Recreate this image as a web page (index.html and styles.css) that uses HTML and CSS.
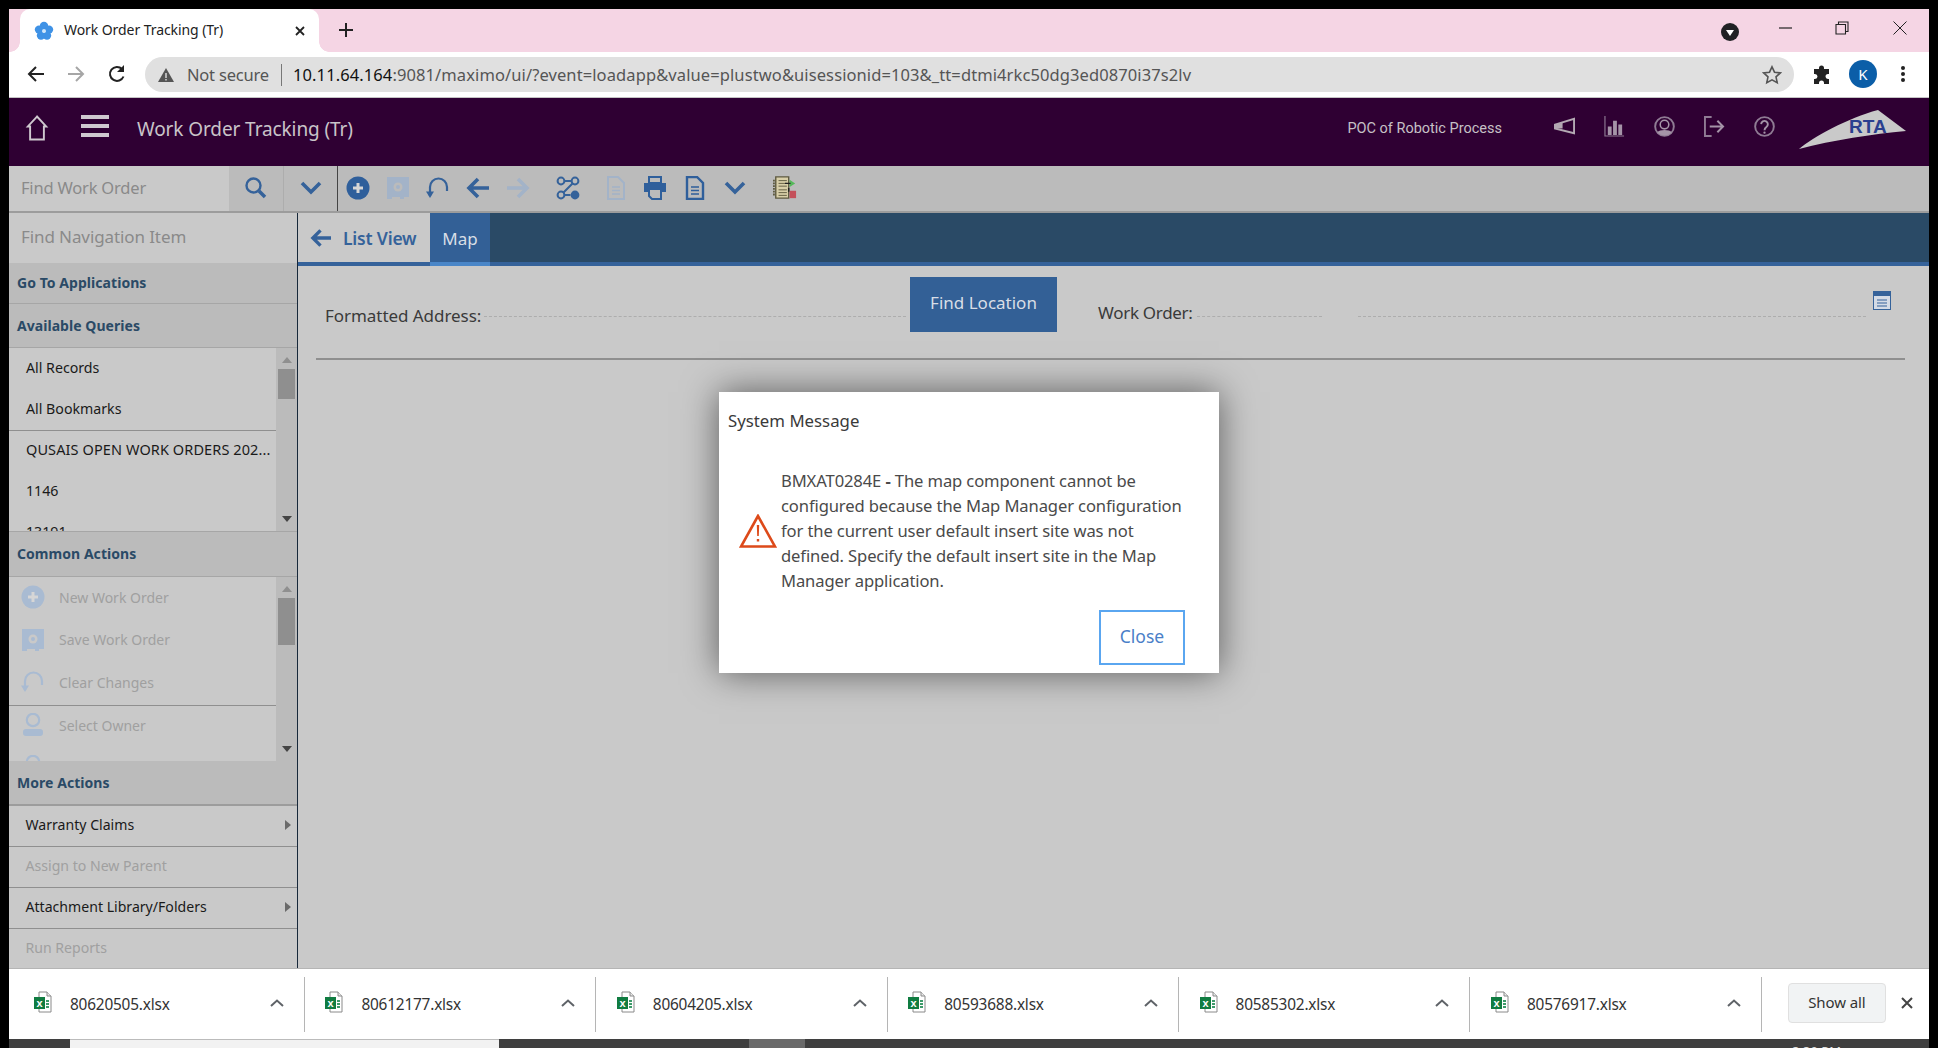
FILE: index.html
```html
<!DOCTYPE html>
<html lang="en">
<head>
<meta charset="utf-8">
<title>Work Order Tracking (Tr)</title>
<link rel="stylesheet" href="styles.css">
</head>
<body>
<svg class="defs" width="0" height="0">
  <symbol id="xls" viewBox="0 0 18 22">
    <path d="M5 1h8l4 4v16H5z" fill="#fff" stroke="#8a8a8a"/>
    <path d="M13 1v4h4" fill="#e8e8e8" stroke="#8a8a8a"/>
    <path d="M12 9h3v2h-3zM12 12h3v2h-3zM12 15h3v2h-3z" fill="#3d9a6a"/>
    <rect x="0" y="6" width="11" height="12" fill="#107c41"/>
    <text x="5.5" y="15.5" class="xls-x">x</text>
  </symbol>
  <symbol id="caret" viewBox="0 0 14 8">
    <path d="M1 7l6-5.5L13 7" fill="none" stroke="#5f6368" stroke-width="2"/>
  </symbol>
</svg>
<div class="screen">
  <div class="tabstrip">
    <div class="tab">
      <svg class="favicon" viewBox="0 0 20 20"><g fill="#3f92e6"><circle cx="10" cy="5" r="4.2"/><circle cx="15" cy="8.6" r="4.2"/><circle cx="13" cy="14.6" r="4.2"/><circle cx="7" cy="14.6" r="4.2"/><circle cx="5" cy="8.6" r="4.2"/></g><circle cx="10" cy="10" r="2" fill="#cfe6fb"/></svg>
      <span class="tab-title">Work Order Tracking (Tr)</span>
      <svg class="tab-x" viewBox="0 0 10 10"><path d="M1 1l8 8M9 1l-8 8" stroke="#222" stroke-width="1.8"/></svg>
    </div>
    <svg class="newtab" viewBox="0 0 14 14"><path d="M7 0v14M0 7h14" stroke="#222" stroke-width="2"/></svg>
    <div class="strip-right">
      <svg class="profile-drop" viewBox="0 0 18 18"><circle cx="9" cy="9" r="9" fill="#202124"/><path d="M5 7h8l-4 6z" fill="#fff"/></svg>
      <svg class="winbtn win-min" viewBox="0 0 14 14"><path d="M0 7h13" stroke="#222" stroke-width="1.2"/></svg>
      <svg class="winbtn win-max" viewBox="0 0 14 14"><path d="M1 3.5h9.5V13H1zM3.500 3.500V1H13v9.500h-2.500" fill="none" stroke="#222" stroke-width="1.100"/></svg>
      <svg class="winbtn win-close" viewBox="0 0 14 14"><path d="M.5.500l13 13M13.500.500l-13 13" stroke="#222" stroke-width="1"/></svg>
    </div>
  </div>

  <div class="chrome-bar">
    <svg class="nav-ico" viewBox="0 0 18 18"><path d="M17 9H2M9 2L2 9l7 7" fill="none" stroke="#222" stroke-width="2"/></svg>
    <svg class="nav-ico" viewBox="0 0 18 18"><path d="M1 9h15M9 2l7 7-7 7" fill="none" stroke="#a6a6a6" stroke-width="2"/></svg>
    <svg class="nav-ico nav-reload" viewBox="0 0 18 18"><path d="M15.500 11.500A7 7 0 1 1 14 4" fill="none" stroke="#222" stroke-width="2"/><path d="M16 0v7H9z" fill="#222"/></svg>
    <div class="omnibox">
      <svg class="warn-small" viewBox="0 0 16 14"><path d="M8 0l8 14H0z" fill="#555"/><path d="M7.300 5h1.400v5H7.300zM7.300 11h1.400v1.400H7.300z" fill="#e0e0e0"/></svg>
      <span class="not-secure">Not secure</span>
      <span class="omni-div"></span>
      <span class="url"><span class="url-host">10.11.64.164</span>:9081/maximo/ui/?event=loadapp&amp;value=plustwo&amp;uisessionid=103&amp;_tt=dtmi4rkc50dg3ed0870i37s2lv</span>
      <svg class="star" viewBox="0 0 20 20"><path d="M10 1.800l2.500 5.400 5.800.7-4.300 4 1.200 5.800-5.200-2.900-5.200 2.900 1.200-5.800-4.300-4 5.800-.7z" fill="none" stroke="#555" stroke-width="1.600"/></svg>
    </div>
    <svg class="puzzle" viewBox="0 0 20 20"><path d="M7 3a2.500 2.500 0 0 1 5 0v1h5v5h-1a2.500 2.500 0 0 0 0 5h1v5h-5v-1a2.500 2.500 0 0 0-5 0v1H2v-5h1a2.500 2.500 0 0 0 0-5H2V4h5z" fill="#222"/></svg>
    <span class="avatar">K</span>
    <svg class="kebab" viewBox="0 0 4 18"><circle cx="2" cy="3" r="2" fill="#222"/><circle cx="2" cy="9" r="2" fill="#222"/><circle cx="2" cy="15" r="2" fill="#222"/></svg>
  </div>

  <header class="appbar">
    <svg class="home" viewBox="0 0 26 34"><path d="M13 2L1 15h3v17h18V15h3z" fill="none" stroke="#cfc8cf" stroke-width="2.500"/></svg>
    <div class="burger"><span></span><span></span><span></span></div>
    <h1 class="app-title">Work Order Tracking (Tr)</h1>
    <div class="app-right">
      <span class="poc">POC of Robotic Process</span>
      <svg class="hd-ico" viewBox="0 0 22 22"><path d="M1 9l20-6v15L1 13z" fill="none" stroke="#b3a8b3" stroke-width="2"/><path d="M1 9v4h8V7z" fill="#b3a8b3"/></svg>
      <svg class="hd-ico" viewBox="0 0 22 22"><path d="M1 0v21h20" fill="none" stroke="#8f7b94" stroke-width="1.200"/><path d="M4 11h4v9H4zM9.500 5h4v15h-4zM15 9h4v11h-4z" fill="#a594a8"/></svg>
      <svg class="hd-ico" viewBox="0 0 22 22"><circle cx="11" cy="11" r="9.800" fill="none" stroke="#8f7b94" stroke-width="2"/><circle cx="11" cy="9" r="4.500" fill="none" stroke="#a594a8" stroke-width="1.600"/><path d="M3.500 17c2-3 13-3 15 0a10 10 0 0 1-15 0z" fill="#a594a8"/></svg>
      <svg class="hd-ico" viewBox="0 0 22 22"><path d="M8 1H1v20h7" fill="none" stroke="#8f7b94" stroke-width="2"/><path d="M6 11h14M14 5l6 6-6 6" fill="none" stroke="#a594a8" stroke-width="2"/></svg>
      <svg class="hd-ico hd-last" viewBox="0 0 22 22"><circle cx="11" cy="11" r="9.800" fill="none" stroke="#8f7b94" stroke-width="2"/><path d="M7.500 8.500a3.500 3.500 0 1 1 5.500 3c-1.500 1-2 1.500-2 3.500" fill="none" stroke="#a594a8" stroke-width="2"/><circle cx="11" cy="17.500" r="1.200" fill="#a594a8"/></svg>
      <svg class="rta" viewBox="0 0 108 40"><path d="M1 39C15 27 50 8 80 0l28 21C75 24 35 30 1 39z" fill="#c9c9c9"/><text x="51" y="23" class="rta-text">RTA</text></svg>
    </div>
  </header>

  <div class="toolbar">
    <div class="find-record">Find Work Order</div>
    <div class="tb-cell tb-search">
      <svg class="tb-ico" viewBox="0 0 24 24"><circle cx="9.500" cy="9.500" r="7" fill="none" stroke="#35629a" stroke-width="2.400"/><path d="M15 15l6 6" stroke="#35629a" stroke-width="3.500"/></svg>
    </div>
    <div class="tb-cell tb-drop">
      <svg class="tb-ico" viewBox="0 0 24 24"><path d="M3 7l9 9 9-9" fill="none" stroke="#35629a" stroke-width="3.600"/></svg>
    </div>
    <div class="tb-icons">
      <svg class="tb-ico" viewBox="0 0 24 24"><circle cx="12" cy="12" r="11.500" fill="#2f5f9b"/><path d="M12 7v10M7 12h10" stroke="#d6d6d6" stroke-width="3"/></svg>
      <svg class="tb-ico" viewBox="0 0 24 24"><path d="M1 1h22v20h-5v2h-4v-2H6v2H1z" fill="#a3b3c8"/><circle cx="12" cy="11" r="4.500" fill="#bbb"/><circle cx="12" cy="11" r="2" fill="#a3b3c8"/></svg>
      <svg class="tb-ico" viewBox="0 0 24 24"><path d="M21 15V11a8.500 8.500 0 0 0-17 0v9" fill="none" stroke="#35629a" stroke-width="2.200"/><path d="M0 15.500l4 6.500 4-6.500z" fill="#35629a"/></svg>
      <svg class="tb-ico" viewBox="0 0 24 24"><path d="M23 12H4M12 3l-9 9 9 9" fill="none" stroke="#35629a" stroke-width="3.600"/></svg>
      <svg class="tb-ico" viewBox="0 0 24 24"><path d="M1 12h19M12 3l9 9-9 9" fill="none" stroke="#a3b3c8" stroke-width="3.600"/></svg>
      <svg class="tb-ico tb-gap-l" viewBox="0 0 24 24"><circle cx="5" cy="5" r="3.400" fill="none" stroke="#35629a" stroke-width="2"/><circle cx="19" cy="5" r="3.400" fill="none" stroke="#35629a" stroke-width="2"/><circle cx="5" cy="19" r="3.400" fill="none" stroke="#35629a" stroke-width="2"/><circle cx="19" cy="19" r="4.400" fill="#35629a"/><path d="M8.500 5h7M16.500 7.500l-9 9M8.500 19h6" fill="none" stroke="#35629a" stroke-width="2"/></svg>
      <svg class="tb-ico tb-gap-m" viewBox="0 0 24 24"><path d="M4 1h10l6 6v16H4z" fill="none" stroke="#a3b3c8" stroke-width="2"/><path d="M8 11h8M8 14.500h8M8 18h8" stroke="#a3b3c8" stroke-width="1.500"/></svg>
      <svg class="tb-ico tb-gap-s" viewBox="0 0 24 24"><path d="M6 1h12v6H6z" fill="none" stroke="#2f5f9b" stroke-width="2"/><path d="M1 7h22v9H1z" fill="#2f5f9b"/><path d="M6 13h12v10H9l-3-3z" fill="#bbb" stroke="#2f5f9b" stroke-width="2"/></svg>
      <svg class="tb-ico" viewBox="0 0 24 24"><path d="M4 1h10l6 6v16H4z" fill="none" stroke="#2f5f9b" stroke-width="2.400"/><path d="M8 11h8M8 14.500h8M8 18h8" stroke="#2f5f9b" stroke-width="1.500"/></svg>
      <svg class="tb-ico" viewBox="0 0 24 24"><path d="M3 7l9 9 9-9" fill="none" stroke="#35629a" stroke-width="3.600"/></svg>
      <svg class="tb-ico tb-gap-l" viewBox="0 0 26 26"><path d="M3 1h14v23H3z" fill="#d8cfa8" stroke="#5e5a40" stroke-width="1.500"/><path d="M6 5h9M6 8h9M6 11h9M6 15h9M6 18h9M6 21h9" stroke="#5e5a40"/><path d="M1 4v18" stroke="#5e5a40" stroke-dasharray="2 1" stroke-width="2"/><path d="M18 4l6 4-6 4z" fill="#55b85a"/><path d="M18 16h7v8h-7z" fill="#c4505a"/><path d="M13 8h6M17 13v4" stroke="#222" stroke-width="1.600"/></svg>
    </div>
  </div>

  <div class="workspace">
    <aside class="sidebar">
      <div class="find-nav">Find Navigation Item</div>
      <div class="side-head side-head-a">Go To Applications</div>
      <div class="side-head side-head-b">Available Queries</div>
      <div class="scrolled scrolled-q">
        <ul class="plain-list">
          <li class="q-item">All Records</li>
          <li class="q-item">All Bookmarks</li>
          <li class="q-item q-sep">QUSAIS OPEN WORK ORDERS 202...</li>
          <li class="q-item">1146</li>
          <li class="q-item">13191</li>
        </ul>
        <div class="scrollbar"><span class="arrow-up"></span><span class="thumb thumb-q"></span><span class="arrow-down"></span></div>
      </div>
      <div class="side-head side-head-c">Common Actions</div>
      <div class="scrolled scrolled-a">
        <ul class="plain-list">
          <li class="a-item"><svg class="a-ico" viewBox="0 0 24 24"><circle cx="12" cy="12" r="11.500" fill="#a9bbd2"/><path d="M12 7v10M7 12h10" stroke="#d6d6d6" stroke-width="3"/></svg>New Work Order</li>
          <li class="a-item"><svg class="a-ico" viewBox="0 0 24 24"><path d="M1 1h22v20h-5v2h-4v-2H6v2H1z" fill="#a9bbd2"/><circle cx="12" cy="11" r="4.500" fill="#c9c9c9"/><circle cx="12" cy="11" r="2" fill="#a9bbd2"/></svg>Save Work Order</li>
          <li class="a-item"><svg class="a-ico" viewBox="0 0 24 24"><path d="M21 15V11a8.500 8.500 0 0 0-17 0v9" fill="none" stroke="#a9bbd2" stroke-width="2.200"/><path d="M0 15.500l4 6.500 4-6.500z" fill="#a9bbd2"/></svg>Clear Changes</li>
          <li class="a-item a-sep"><svg class="a-ico" viewBox="0 0 24 24"><circle cx="12" cy="7" r="6.200" fill="none" stroke="#a9bbd2" stroke-width="2.200"/><rect x="2" y="16" width="20" height="7" rx="3" fill="#a9bbd2"/></svg>Select Owner</li>
          <li class="a-item"><svg class="a-ico" viewBox="0 0 24 24"><circle cx="12" cy="7" r="6.200" fill="none" stroke="#a9bbd2" stroke-width="2.200"/></svg></li>
        </ul>
        <div class="scrollbar"><span class="arrow-up"></span><span class="thumb thumb-a"></span><span class="arrow-down"></span></div>
      </div>
      <div class="side-head side-head-d">More Actions</div>
      <ul class="plain-list more-list">
        <li class="m-item">Warranty Claims<span class="arrow-right"></span></li>
        <li class="m-item m-off">Assign to New Parent</li>
        <li class="m-item">Attachment Library/Folders<span class="arrow-right"></span></li>
        <li class="m-item m-off">Run Reports</li>
      </ul>
    </aside>

    <main class="main">
      <div class="tabs">
        <div class="tab-list">
          <svg class="list-arrow" viewBox="0 0 22 20"><path d="M22 10H4M11 2l-8 8 8 8" fill="none" stroke="#35629a" stroke-width="3.500"/></svg>
          List View
        </div>
        <div class="tab-map">Map</div>
      </div>
      <form class="form-row">
        <label class="f-label f-label-a">Formatted Address:</label>
        <span class="f-dash f-dash-a"></span>
        <button class="find-btn" type="button">Find Location</button>
        <label class="f-label f-label-b">Work Order:</label>
        <span class="f-dash f-dash-b"></span>
        <span class="f-dash f-dash-c"></span>
        <svg class="detail-ico" viewBox="0 0 18 19"><rect x=".5" y=".5" width="17" height="18" fill="#d4dbe6" stroke="#35629a"/><rect width="18" height="5" fill="#35629a"/><path d="M4 9h10M4 12h10M4 15h10" stroke="#35629a" stroke-width="1.200"/></svg>
      </form>
    </main>
  </div>

  <div class="downloads">
    <div class="dl-item"><svg class="xls-ico"><use href="#xls"/></svg><span class="dl-name">80620505.xlsx</span><svg class="dl-caret"><use href="#caret"/></svg></div>
    <div class="dl-item"><svg class="xls-ico"><use href="#xls"/></svg><span class="dl-name">80612177.xlsx</span><svg class="dl-caret"><use href="#caret"/></svg></div>
    <div class="dl-item"><svg class="xls-ico"><use href="#xls"/></svg><span class="dl-name">80604205.xlsx</span><svg class="dl-caret"><use href="#caret"/></svg></div>
    <div class="dl-item"><svg class="xls-ico"><use href="#xls"/></svg><span class="dl-name">80593688.xlsx</span><svg class="dl-caret"><use href="#caret"/></svg></div>
    <div class="dl-item"><svg class="xls-ico"><use href="#xls"/></svg><span class="dl-name">80585302.xlsx</span><svg class="dl-caret"><use href="#caret"/></svg></div>
    <div class="dl-item"><svg class="xls-ico"><use href="#xls"/></svg><span class="dl-name">80576917.xlsx</span><svg class="dl-caret"><use href="#caret"/></svg></div>
    <button class="show-all" type="button">Show all</button>
    <svg class="dl-close" viewBox="0 0 12 12"><path d="M1 1l10 10M11 1L1 11" stroke="#444" stroke-width="2"/></svg>
  </div>

  <div class="taskstrip">
    <span class="ts-dark ts-a"></span>
    <span class="ts-light"></span>
    <span class="ts-dark ts-b"></span>
    <span class="ts-mid"></span>
    <span class="ts-dark ts-c"><span class="ts-clock">3:30 PM</span></span>
  </div>

  <div class="dialog" role="dialog">
    <div class="dlg-title">System Message</div>
    <div class="dlg-body">
      <svg class="dlg-warn" viewBox="0 0 38 34"><path d="M19 2L2 32.500h34z" fill="none" stroke="#dd4a1a" stroke-width="2.600"/><path d="M17.800 11h2.400l-.4 11h-1.600zM17.800 25h2.400v2.600h-2.400z" fill="#dd4a1a"/></svg>
      <p class="dlg-msg">BMXAT0284E <b class="dlg-dash">-</b> The map component cannot be configured because the Map Manager configuration for the current user default insert site was not defined. Specify the default insert site in the Map Manager application.</p>
    </div>
    <div class="dlg-foot"><button class="close-btn" type="button">Close</button></div>
  </div>
</div>
</body>
</html>
```
FILE: styles.css
```css
* { box-sizing: border-box; }
html, body { margin: 0; height: 100%; overflow: hidden; background: #000; }
body { font-family: "Noto Sans", "Liberation Sans", sans-serif; }
.defs { display: block; height: 0; }
.xls-x { font: bold 11px "Liberation Sans", sans-serif; fill: #fff; text-anchor: middle; }
.screen { position: relative; height: 1048px; padding: 9px 9px 0; display: flex; flex-direction: column; overflow: hidden; }

/* tab strip */
.tabstrip { height: 43px; flex: none; background: #f5d5e4; display: flex; align-items: flex-start; }
.tab { position: relative; margin-left: 11px; width: 299px; height: 43px; background: #fff; border-radius: 10px 10px 0 0; display: flex; align-items: center; padding: 0 14px; }
.tab::before, .tab::after { content: ""; position: absolute; bottom: 0; width: 10px; height: 10px; }
.tab::before { left: -10px; background: radial-gradient(circle at 0 0, transparent 9.500px, #fff 10px); }
.tab::after { right: -10px; background: radial-gradient(circle at 100% 0, transparent 9.500px, #fff 10px); }
.favicon { width: 20px; height: 20px; margin-right: 10px; flex: none; }
.tab-title { font-size: 14px; line-height: 18px; margin-top: -2px; color: #222; flex: 1; white-space: nowrap; letter-spacing: -.07px; }
.tab-x { width: 10px; height: 10px; flex: none; }
.newtab { width: 14px; height: 14px; margin: 14px 0 0 20px; flex: none; }
.strip-right { margin-left: auto; display: flex; align-items: flex-start; padding-right: 22px; }
.profile-drop { width: 18px; height: 18px; margin-top: 14px; }
.winbtn { width: 14px; height: 14px; margin: 12px 0 0 42px; }
.win-min { margin-left: 40px; }
.win-close { margin-left: 44px; }

/* browser bar */
.chrome-bar { height: 46px; flex: none; background: #fff; border-bottom: 1px solid #c4c4c4; display: flex; align-items: flex-start; padding: 5px 0 0 18px; }
.nav-ico { width: 18px; height: 18px; margin: 8px 22px 0 0; flex: none; }
.nav-reload { margin: 8px 0 0 1px; }
.omnibox { margin-left: 19px; width: 1649px; height: 35px; flex: none; background: #e0e0e0; border-radius: 18px; display: flex; align-items: center; padding: 0 12px 0 13px; }
.warn-small { width: 16px; height: 14px; flex: none; margin-right: 13px; }
.not-secure { font-size: 16.500px; color: #555; letter-spacing: -.2px; white-space: nowrap; width: 83px; }
.omni-div { width: 1px; height: 22px; background: #777; margin: 0 11px; flex: none; }
.url { font-size: 16.500px; color: #555; white-space: nowrap; letter-spacing: .1px; flex: 1; }
.url-host { color: #111; }
.star { width: 20px; height: 20px; flex: none; }
.puzzle { width: 20px; height: 20px; margin: 8px 0 0 18px; flex: none; }
.avatar { width: 28px; height: 28px; margin: 3px 0 0 17px; border-radius: 50%; background: #0b5ea8; color: #fff; font-size: 15px; display: flex; align-items: center; justify-content: center; flex: none; }
.kebab { width: 4px; height: 18px; margin: 8px 0 0 24px; flex: none; }

/* app header */
.appbar { height: 68px; flex: none; background: #2f0033; display: flex; align-items: flex-start; padding: 17px 0 0 15px; }
.home { width: 26px; height: 26px; flex: none; }
.burger { margin: 0 0 0 31px; width: 28px; height: 22px; display: flex; flex-direction: column; justify-content: space-between; flex: none; }
.burger span { height: 4px; background: #cfc8cf; display: block; }
.app-title { margin: 1px 0 0 28px; font-weight: 400; font-size: 19px; line-height: 26px; color: #c9c4c9; white-space: nowrap; letter-spacing: -.1px; }
.app-right { margin-left: auto; display: flex; align-items: flex-start; padding-right: 23px; margin-top: -5px; }
.poc { font-family: Roboto, sans-serif; font-size: 14.500px; line-height: 20px; color: #c6c0c6; margin: 9px 52px 0 0; white-space: nowrap; }
.hd-ico { width: 21px; height: 21px; margin: 6px 29px 0 0; flex: none; }
.hd-last { margin-right: 23px; }
.rta { width: 108px; height: 40px; flex: none; }
.rta-text { font: bold 19px "Liberation Sans", sans-serif; fill: #2a3f8f; }

/* toolbar */
.toolbar { height: 47px; flex: none; background: #bbb; border-bottom: 2px solid #9c9c9c; display: flex; }
.find-record { width: 220px; background: #c9c9c9; color: #8a8a8a; font-size: 16.500px; padding: 0 0 2px 12px; display: flex; align-items: center; letter-spacing: -.2px; }
.tb-cell { display: flex; align-items: center; justify-content: center; flex: none; padding-bottom: 1px; }
.tb-search { width: 55px; border-right: 1px solid #adadad; }
.tb-drop { width: 54px; border-right: 1px solid #444; }
.tb-ico { width: 24px; height: 24px; flex: none; }
.tb-icons { display: flex; align-items: center; gap: 16px; padding: 0 0 1px 8px; }
.tb-gap-l { margin-left: 10px; }
.tb-gap-m { margin-left: 8px; }
.tb-gap-s { margin-left: -1px; }

/* workspace */
.workspace { flex: 1; min-height: 0; display: flex; background: #c9c9c9; }
.sidebar { width: 289px; flex: none; border-right: 1px solid #17283a; display: flex; flex-direction: column; overflow: hidden; }
.find-nav { height: 50px; flex: none; display: flex; align-items: center; padding: 0 0 3px 12px; font-size: 17px; color: #8a8a8a; letter-spacing: -.1px; }
.side-head { flex: none; background: #bbb; color: #2a4a66; font-size: 14px; letter-spacing: .05px; font-weight: 700; display: flex; align-items: center; padding: 0 0 1px 8px; border-bottom: 1px solid #a6a6a6; }
.side-head-a { height: 41px; }
.side-head-b { height: 44px; }
.side-head-c { height: 46px; border-top: 1px solid #a6a6a6; }
.side-head-d { height: 45px; border-bottom: 2px solid #9c9c9c; }
.scrolled { flex: none; display: flex; overflow: hidden; }
.scrolled-q { height: 183px; }
.scrolled-a { height: 184px; }
.plain-list { list-style: none; margin: 0; padding: 0; }
.scrolled .plain-list { flex: 1; min-width: 0; }
.scrollbar { width: 21px; flex: none; background: #bbb; display: flex; flex-direction: column; align-items: center; padding: 9px 0; }
.arrow-up { width: 0; height: 0; border: 5px solid transparent; border-top: 0; border-bottom: 6px solid #8f8f8f; flex: none; }
.arrow-down { width: 0; height: 0; border: 5px solid transparent; border-bottom: 0; border-top: 6px solid #444; margin-top: auto; flex: none; }
.thumb { width: 17px; background: #8f8f8f; margin-top: 6px; flex: none; }
.thumb-q { height: 30px; }
.thumb-a { height: 47px; }
.q-item { height: 41px; display: flex; align-items: center; padding: 0 0 3px 17px; font-size: 14.200px; color: #1a1a1a; white-space: nowrap; }
.q-sep { border-top: 1px solid #8f8f8f; font-size: 14.500px; letter-spacing: .1px; padding-bottom: 4px; }
.a-item { height: 42.500px; display: flex; align-items: center; padding: 0 0 2px 12px; font-size: 14px; color: #a0a0a0; white-space: nowrap; }
.a-sep { border-top: 1px solid #8f8f8f; }
.a-ico { width: 24px; height: 24px; margin-right: 14px; flex: none; }
.more-list { flex: none; }
.m-item { position: relative; height: 41px; display: flex; align-items: center; padding: 0 6px 3px 16.500px; font-size: 14.100px; color: #1a1a1a; border-bottom: 1px solid #8f8f8f; white-space: nowrap; }
.m-off { color: #a0a0a0; }
.arrow-right { width: 0; height: 0; border: 5px solid transparent; border-right: 0; border-left: 6px solid #6a6a6a; margin-left: auto; }

/* main */
.main { flex: 1; min-width: 0; display: flex; flex-direction: column; }
.tabs { height: 53px; flex: none; background: #2a4a66; border-bottom: 4px solid #35629a; display: flex; }
.tab-list { width: 132px; height: 49px; background: #c9c9c9; display: flex; align-items: center; padding-left: 12px; gap: 12px; color: #35629a; font-size: 17.500px; font-weight: 600; letter-spacing: -.2px; white-space: nowrap; }
.list-arrow { width: 21px; height: 20px; flex: none; }
.tab-map { width: 60px; height: 53px; padding-top: 14px; text-align: center; background: #336096; border-bottom: 4px solid #4a86c8; color: #d8dee6; font-size: 17px; margin-bottom: -4px; }
.form-row { height: 94px; flex: none; margin: 0 24px 0 18px; border-bottom: 2px solid #8f8f8f; display: flex; align-items: flex-start; padding: 11px 0 0 9px; }
.f-label { font-size: 17px; color: #3a3a3a; white-space: nowrap; letter-spacing: -.05px; }
.f-label-a { margin-top: 27px; width: 159px; }
.f-label-b { margin: 24px 3px 0 41px; width: 96px; letter-spacing: -.3px; }
.f-dash { height: 1px; border-bottom: 1px dashed #adadad; flex: none; margin-top: 39px; }
.f-dash-a { width: 422px; }
.f-dash-b { width: 125px; margin-right: 36px; }
.f-dash-c { width: 508px; }
.find-btn { width: 147px; height: 55px; margin-left: 4px; padding: 0 0 5px; border: 0; background: #336096; color: #d8dee6; font: 17px "Noto Sans", sans-serif; flex: none; }
.detail-ico { width: 18px; height: 19px; margin: 14px 0 0 7px; flex: none; }

/* downloads */
.downloads { height: 71px; flex: none; background: #fff; border-top: 1px solid #b5b5b5; display: flex; align-items: flex-start; padding-left: 4.500px; }
.dl-item { width: 291.400px; height: 55px; margin-top: 8px; border-right: 1px solid #b5b5b5; display: flex; align-items: center; padding: 0 20px 0 20.500px; flex: none; }
.xls-ico { width: 18px; height: 22px; margin-top: -6px; flex: none; }
.dl-name { font-size: 15.400px; color: #333; margin-left: 18px; flex: 1; letter-spacing: -.2px; }
.dl-caret { width: 14px; height: 8px; flex: none; margin-top: -4px; }
.show-all { width: 98px; height: 40px; margin: 14px 0 0 26px; background: #f1f3f4; border: 1px solid #e0e0e0; border-radius: 4px; font: 15px "Noto Sans", sans-serif; color: #333; letter-spacing: -.1px; flex: none; padding: 0 0 2px; }
.dl-close { width: 12px; height: 12px; margin: 28px 0 0 15px; flex: none; }

/* bottom strip */
.taskstrip { height: 9px; flex: none; display: flex; background: #3f3f3f; }
.ts-dark { display: block; background: #3f3f3f; }
.ts-a { width: 61px; }
.ts-light { width: 429px; background: #f2f2f2; border-top: 1px solid #bbb; }
.ts-b { width: 250px; }
.ts-mid { width: 56px; background: #6a6a6a; }
.ts-c { flex: 1; overflow: hidden; text-align: right; padding-right: 88px; }
.ts-clock { display: block; font-size: 13px; line-height: 14px; color: #ddd; margin-top: 5px; }

/* dialog */
.dialog { position: absolute; left: 719px; top: 392px; width: 500px; height: 281px; background: #fff; box-shadow: 0 0 34px rgba(0, 0, 0, .55); display: flex; flex-direction: column; }
.dlg-title { font-size: 16.800px; color: #3a3a3a; padding: 17px 0 0 9px; line-height: 24px; }
.dlg-body { display: flex; align-items: center; padding: 35px 0 0 20px; }
.dlg-warn { width: 38px; height: 34px; flex: none; margin-right: 4px; }
.dlg-msg { margin: 0; width: 406px; font-size: 16.600px; line-height: 25px; color: #4a4a4a; letter-spacing: -.12px; }
.dlg-dash { font-weight: 700; }
.dlg-foot { display: flex; justify-content: flex-end; padding: 17px 34px 0 0; }
.close-btn { width: 86px; height: 55px; background: #fff; border: 2px solid #5aa6f0; color: #4a7fc8; font: 17.500px "Noto Sans", sans-serif; padding: 0 0 4px; }
```
